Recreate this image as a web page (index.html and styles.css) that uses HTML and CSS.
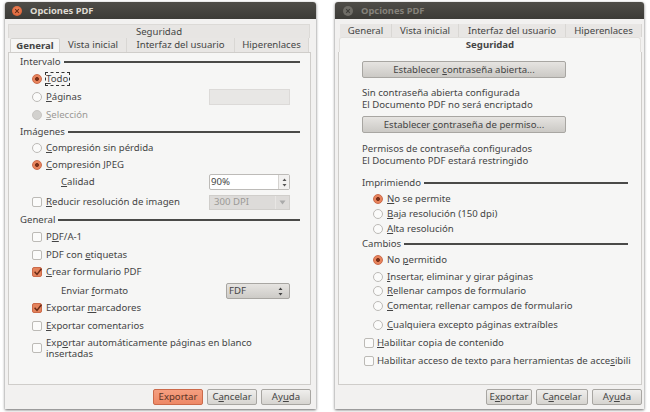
FILE: index.html
```html
<!DOCTYPE html>
<html lang="es">
<head>
<meta charset="utf-8">
<title>Opciones PDF</title>
<link rel="stylesheet" href="styles.css">
</head>
<body>
<section class="win win-left">
  <header class="titlebar">
    <span class="close active"><svg viewBox="0 0 10 10" width="10" height="10"><path d="M3.2 3.2l3.6 3.6M6.8 3.2l-3.6 3.6" stroke="#6b2c16" stroke-width="1.1"/></svg></span>
    <span class="title">Opciones PDF</span>
  </header>
  <div class="body">
    <div class="tab-back">Seguridad</div>
    <div class="tabs">
      <span class="tab tab-on l1">General</span>
      <span class="tab l2">Vista inicial</span>
      <span class="tab l3">Interfaz del usuario</span>
      <span class="tab l4">Hiperenlaces</span>
    </div>
    <div class="panel panel-left">
      <div class="group"><span>Intervalo</span><i></i></div>
      <div class="row mt3"><b class="radio on"></b><span class="focus"><u>T</u>odo</span></div>
      <div class="row mt4 with-end"><b class="radio"></b><span><u>P</u>áginas</span><em class="field-disabled"></em></div>
      <div class="row mt4 dim"><b class="radio off"></b><span><u>S</u>elección</span></div>
      <div class="group mt3"><span>Imágenes</span><i></i></div>
      <div class="row mt2"><b class="radio"></b><span><u>C</u>ompresión sin pérdida</span></div>
      <div class="row mt3"><b class="radio on"></b><span><u>C</u>ompresión JPEG</span></div>
      <div class="row mt3 sub with-end"><span><u>C</u>alidad</span>
        <em class="spin"><span>90%</span><span class="spin-btn"><svg width="7" height="13" viewBox="0 0 7 13"><path d="M3.5 2.5l2 2.5h-4zM3.5 10.5l2-2.5h-4z" fill="#555"/></svg></span></em>
      </div>
      <div class="row mt6 with-end"><b class="check"></b><span><u>R</u>educir resolución de imagen</span>
        <em class="select-disabled"><span>300 DPI</span><span class="sd-btn"><svg width="7" height="5" viewBox="0 0 7 5"><path d="M0.5 0.5h6l-3 4z" fill="#aaa"/></svg></span></em>
      </div>
      <div class="group mt4"><span>General</span><i></i></div>
      <div class="row mt3"><b class="check"></b><span>P<u>D</u>F/A-1</span></div>
      <div class="row mt4"><b class="check"></b><span>PDF con <u>e</u>tiquetas</span></div>
      <div class="row mt3"><b class="check on"><svg width="12" height="12" viewBox="0 0 12 12"><path d="M2.6 5.8l2.4 2.6L9.4 2.8" fill="none" stroke="#6a2c18" stroke-width="1.5"/></svg></b><span><u>C</u>rear formulario PDF</span></div>
      <div class="row mt5 sub with-end"><span>Enviar <u>f</u>ormato</span>
        <em class="select"><span>FDF</span><svg width="7" height="13" viewBox="0 0 7 13"><path d="M3.5 2.5l2 2.5h-4zM3.5 10.5l2-2.5h-4z" fill="#444"/></svg></em>
      </div>
      <div class="row mt3"><b class="check on"><svg width="12" height="12" viewBox="0 0 12 12"><path d="M2.6 5.8l2.4 2.6L9.4 2.8" fill="none" stroke="#6a2c18" stroke-width="1.5"/></svg></b><span>Exportar <u>m</u>arcadores</span></div>
      <div class="row mt4"><b class="check"></b><span><u>E</u>xportar comentarios</span></div>
      <div class="row mt4 multi"><b class="check"></b><span>Exp<u>o</u>rtar automáticamente páginas en blanco<br>insertadas</span></div>
    </div>
    <footer class="actions">
      <button class="btn primary">Exportar</button>
      <button class="btn">C<u>a</u>ncelar</button>
      <button class="btn">Ay<u>u</u>da</button>
    </footer>
  </div>
</section>

<section class="win win-right">
  <header class="titlebar inactive">
    <span class="close"><svg viewBox="0 0 10 10" width="10" height="10"><path d="M3.2 3.2l3.6 3.6M6.8 3.2l-3.6 3.6" stroke="#3c3b37" stroke-width="1.1"/></svg></span>
    <span class="title">Opciones PDF</span>
  </header>
  <div class="body">
    <div class="tabs tabs-right">
      <span class="tab r1">General</span>
      <span class="tab r2">Vista inicial</span>
      <span class="tab r3">Interfaz del usuario</span>
      <span class="tab r4">Hiperenlaces</span>
    </div>
    <div class="tab-front">Seguridad</div>
    <div class="panel panel-right">
      <button class="wide">Establecer <u>c</u>ontraseña abierta...</button>
      <p class="note n-first">Sin contraseña abierta configurada<br>El Documento PDF no será encriptado</p>
      <button class="wide b-second">Establecer <u>c</u>ontraseña de permiso...</button>
      <p class="note n-second">Permisos de contraseña configurados<br>El Documento PDF estará restringido</p>
      <div class="group g-print"><span>Imprimiendo</span><i></i></div>
      <div class="row rr mt2"><b class="radio on"></b><span><u>N</u>o se permite</span></div>
      <div class="row rr mt1"><b class="radio"></b><span><u>B</u>aja resolución (150 dpi)</span></div>
      <div class="row rr mt1"><b class="radio"></b><span><u>A</u>lta resolución</span></div>
      <div class="group mt1"><span>Cambios</span><i></i></div>
      <div class="row rr mt2"><b class="radio on"></b><span>No <u>p</u>ermitido</span></div>
      <div class="row rr mt3"><b class="radio"></b><span><u>I</u>nsertar, eliminar y girar páginas</span></div>
      <div class="row rr"><b class="radio"></b><span><u>R</u>ellenar campos de formulario</span></div>
      <div class="row rr mt1"><b class="radio"></b><span><u>C</u>omentar, rellenar campos de formulario</span></div>
      <div class="row rr mt5"><b class="radio"></b><span><u>C</u>ualquiera excepto páginas extraíbles</span></div>
      <div class="row rc mt4"><b class="check"></b><span><u>H</u>abilitar copia de contenido</span></div>
      <div class="row rc mt4"><b class="check"></b><span>Habilitar acceso de texto para herramientas de acce<u>s</u>ibili</span></div>
    </div>
    <footer class="actions actions-right">
      <button class="btn b-exp">E<u>x</u>portar</button>
      <button class="btn b-can">C<u>a</u>ncelar</button>
      <button class="btn">Ay<u>u</u>da</button>
    </footer>
  </div>
</section>
</body>
</html>
```
FILE: styles.css
```css
* { box-sizing: border-box; }
html, body { margin: 0; padding: 0; }
body {
  width: 650px; height: 412px; overflow: hidden; position: relative; background: #fff;
  font: 9.6px/14px "Noto Sans", "Open Sans", sans-serif; color: #454545;
}
u { text-underline-offset: 1px; text-decoration-thickness: 1px; }
.win { position: absolute; top: 2px; height: 407px; display: flex; flex-direction: column; box-shadow: 0 1px 3px rgba(0,0,0,.6); border-radius: 3px 3px 0 0; }
.win-left { left: 5px; width: 311px; }
.win-right { left: 335px; width: 309px; }
.titlebar { flex: none; height: 17px; background: linear-gradient(#4f4d48, #3c3b37); display: flex; align-items: center; gap: 8px; padding-left: 7px; border-radius: 3px 3px 0 0; }
.win-right .titlebar { padding-left: 8px; }
.title { font-weight: 700; font-size: 9.4px; color: #dfdbd2; }
.inactive .title { color: #85827b; }
.close { width: 10px; height: 10px; border-radius: 50%; background: #6f6d67; display: block; line-height: 0; flex: none; }
.close.active { background: radial-gradient(circle at 50% 40%, #f08a5f, #d5552a); }
.body { flex: 1; background: #f2f1f0; display: flex; flex-direction: column; min-height: 0; }
.tab-back { height: 14px; margin: 5px 0 0 3px; width: 302px; text-align: center; background: #e7e5e3; border: 1px solid #dcdad7; border-bottom: 0; line-height: 13px; flex: none; }
.tabs { display: flex; height: 14px; margin-left: 5px; flex: none; position: relative; z-index: 1; }
.tab { height: 14px; text-align: center; background: #e8e6e4; border-right: 1px solid #d9d7d4; white-space: nowrap; line-height: 14px; }
.l1 { width: 50px; } .l2 { width: 67px; } .l3 { width: 108px; } .l4 { width: 74px; }
.r1 { width: 52px; } .r2 { width: 67px; } .r3 { width: 107px; } .r4 { width: 76px; }
.tab-on { background: #f6f6f5; font-weight: 700; border: 1px solid #d4d2cf; border-bottom: 0; border-radius: 2px 2px 0 0; }
.tabs-right { margin: 5px 0 0 5px; height: 13px; }
.tabs-right .tab { height: 13px; line-height: 13px; }
.tab-front { height: 15px; margin-left: 4px; width: 302px; text-align: center; font-weight: 700; background: #f6f6f5; border: 1px solid #e2e0dd; border-bottom: 0; border-radius: 3px 3px 0 0; line-height: 14px; flex: none; }
.panel { background: #f6f6f5; border: 1px solid #cfcdca; display: flex; flex-direction: column; flex: none; }
.panel-left { margin-left: 3px; width: 303px; height: 333px; padding: 2px 10px 0 11px; }
.panel-right { margin-left: 3px; width: 304px; height: 333px; border-top: 0; padding: 9px 13px 0 23px; }
.group { display: flex; align-items: center; gap: 3px; height: 14px; white-space: nowrap; flex: none; }
.group i { flex: 1; height: 1.5px; background: #4a4a48; display: block; }
.row { display: flex; align-items: center; flex: none; white-space: nowrap; gap: 3px; height: 14px; padding-left: 12px; }
.with-end { padding-right: 10px; }
.with-end em { margin-left: auto; font-style: normal; }
.radio { width: 10px; height: 10px; margin-right: 1px; border-radius: 50%; background: #fbfbfa; border: 1px solid #bcbab6; display: block; flex: none; }
.radio.on { background: radial-gradient(circle, #7a3019 0 1.6px, #e8845c 2.3px); border-color: #cb6a4a; }
.radio.off { background: #d2d1ce; border-color: #c8c6c3; }
.check { width: 10px; height: 10px; margin-right: 1px; border-radius: 2px; background: #fbfbfa; border: 1px solid #bcbab6; display: block; flex: none; position: relative; }
.check.on { background: #e4835c; border-color: #cb6a4a; }
.check svg { position: absolute; left: -1px; top: -2px; }
.focus { outline: 1px dashed #333; line-height: 12px; padding-right: 1px; }
.dim { color: #9b9996; }
.sub { padding-left: 41px; }
.mt1 { margin-top: 1px; } .mt2 { margin-top: 2px; } .mt3 { margin-top: 3px; }
.mt4 { margin-top: 4px; } .mt5 { margin-top: 5px; } .mt6 { margin-top: 6px; }
.multi { height: 22px; line-height: 11px; }
.field-disabled { width: 81px; height: 16px; background: #e8e7e5; border: 1px solid #dcdad8; }
.spin { width: 81px; height: 16px; background: #fff; border: 1px solid #bdbbb8; display: flex; justify-content: space-between; align-items: center; padding-left: 1px; border-radius: 2px; }
.spin-btn { width: 11px; height: 14px; border-left: 1px solid #d5d3d0; background: #f2f1f0; display: flex; justify-content: center; align-items: center; }
.select-disabled { width: 81px; height: 15px; background: #dddbd9; border: 1px solid #d0cecb; display: flex; justify-content: space-between; align-items: center; padding-left: 4px; color: #9b9996; }
.sd-btn { width: 14px; height: 13px; border-left: 1px solid #e8e6e4; display: flex; justify-content: center; align-items: center; }
.select { width: 64px; height: 16px; background: linear-gradient(#e6e4e1, #cdcbc7); border: 1px solid #a8a6a2; border-radius: 2px; display: flex; justify-content: space-between; align-items: center; padding: 0 5px 0 2px; }
.actions { display: flex; justify-content: flex-end; gap: 4px; padding-top: 4px; margin-right: 5px; flex: none; }
.actions-right { margin-right: 2px; }
.btn { height: 16px; width: 50px; padding: 0; font: inherit; line-height: 14px; color: inherit; background: linear-gradient(#efeeec, #d6d4d0); border: 1px solid #a8a6a2; border-radius: 2px; }
.btn.primary { background: linear-gradient(#f59f80, #ee8866); border-color: #cb6a4a; color: #5a3326; }
.b-exp { width: 46px; } .b-can { width: 52px; }
.wide { width: 204px; height: 17px; padding: 0; font: inherit; line-height: 14px; color: inherit; background: linear-gradient(#e6e4e1, #cbc9c5); border: 1px solid #a8a6a2; border-radius: 2px; flex: none; }
.note { margin: 0; line-height: 12px; flex: none; }
.n-first { margin-top: 9px; }
.b-second { margin-top: 5px; }
.n-second { margin-top: 10px; }
.g-print { margin-top: 9px; }
.rr { padding-left: 11px; }
.rc { padding-left: 2px; }
.rc .check { margin-right: 0; }
```
